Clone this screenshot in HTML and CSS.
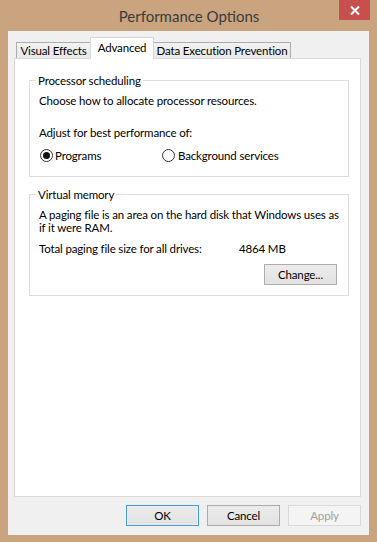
FILE: index.html
```html
<!DOCTYPE html>
<html>
<head>
<meta charset="utf-8">
<link rel="stylesheet" href="styles.css">
</head>
<body>
<div class="window">
  <div class="titlebar">
    <span class="title">Performance Options</span>
    <button class="close" aria-label="Close">
      <svg width="10" height="9" viewBox="0 0 10 9"><path d="M1 0.5 L9 8.5 M9 0.5 L1 8.5" stroke="#fff" stroke-width="2"/></svg>
    </button>
  </div>
  <div class="client">
    <div class="tabs">
      <div class="tab t-visual">Visual Effects</div>
      <div class="tab active t-adv">Advanced</div>
      <div class="tab t-dep">Data Execution Prevention</div>
    </div>
    <div class="panel">
      <div class="group g1">
        <span class="legend">Processor scheduling</span>
        <p class="line">Choose how to allocate processor resources.</p>
        <p class="line adjust">Adjust for best performance of:</p>
        <div class="radios">
          <label class="radio r1">
            <svg width="13" height="13" viewBox="0 0 13 13"><circle cx="6.5" cy="6.5" r="6" fill="#fff" stroke="#333"/><circle cx="6.5" cy="6.5" r="3.5" fill="#111"/></svg>
            <span>Programs</span>
          </label>
          <label class="radio r2">
            <svg width="13" height="13" viewBox="0 0 13 13"><circle cx="6.5" cy="6.5" r="6" fill="#fff" stroke="#333"/></svg>
            <span>Background services</span>
          </label>
        </div>
      </div>
      <div class="group g2">
        <span class="legend">Virtual memory</span>
        <p class="line nowrap">A paging file is an area on the hard disk that Windows uses as<br>if it were RAM.</p>
        <div class="total">
          <span class="total-label">Total paging file size for all drives:</span>
          <span class="total-value">4864 MB</span>
        </div>
        <div class="change-row">
          <button class="btn">Change...</button>
        </div>
      </div>
    </div>
    <div class="buttons">
      <button class="btn default">OK</button>
      <button class="btn">Cancel</button>
      <button class="btn disabled">Apply</button>
    </div>
  </div>
</div>
</body>
</html>
```
FILE: styles.css
```css
html, body {
  margin: 0;
  padding: 0;
}
body {
  width: 377px;
  height: 542px;
  overflow: hidden;
  background: #c9a47e;
  font-family: Lato, "Noto Sans", sans-serif;
  font-size: 11.5px;
  letter-spacing: -0.15px;
  line-height: 13px;
  color: #000;
}
.window {
  display: flex;
  flex-direction: column;
  height: 542px;
}
.titlebar {
  height: 31px;
  position: relative;
  display: flex;
  justify-content: center;
  align-items: center;
}
.title {
  font-size: 15px;
  letter-spacing: 0;
  line-height: 20px;
  color: #3b3b3b;
  padding-left: 1px;
}
.close {
  position: absolute;
  top: 0;
  right: 7px;
  width: 31px;
  height: 20px;
  margin: 0;
  padding: 0;
  border: none;
  background: #c7504f;
  display: flex;
  align-items: center;
  justify-content: center;
}
.client {
  flex: 1;
  margin: 0 8px 7px 8px;
  background: #f0f0f0;
  padding: 6px 8px 9px 6px;
  display: flex;
  flex-direction: column;
  min-height: 0;
}
.tabs {
  display: flex;
  align-items: flex-end;
  height: 21px;
  padding-left: 2px;
}
.tab {
  height: 16px;
  box-sizing: border-box;
  border: 1px solid #acacac;
  border-bottom: none;
  background: linear-gradient(#f2f2f2, #e8e8e8);
  padding: 0;
  text-align: center;
  line-height: 15px;
  white-space: nowrap;
  position: relative;
}
.t-visual {
  width: 75px;
}
.t-adv {
  width: 64px;
}
.t-dep {
  width: 137px;
  border-left: none;
}
.tab.active {
  height: 22px;
  margin: 0 0 -1px -1px;
  border-color: #d9d9d9;
  background: #fff;
  padding-top: 2px;
  z-index: 1;
}
.panel {
  flex: 1;
  border: 1px solid #d9d9d9;
  background: #fff;
  padding: 21px 0 0 14px;
  min-height: 0;
}
.group {
  position: relative;
  width: 320px;
  box-sizing: border-box;
  border: 1px solid #dcdcdc;
  padding: 0 9px;
}
.legend {
  position: absolute;
  top: -7px;
  left: 6px;
  background: #fff;
  padding: 0 2px;
  line-height: 13px;
}
.line {
  margin: 0;
}
.nowrap {
  white-space: nowrap;
}
.g1 {
  padding-top: 13px;
  padding-bottom: 14px;
}
.g1 .adjust {
  margin-top: 19px;
}
.radios {
  display: flex;
  margin-top: 10px;
  height: 13px;
}
.radio {
  display: flex;
  align-items: center;
  gap: 2px;
  white-space: nowrap;
}
.radio svg {
  flex: none;
}
.r1 {
  width: 122px;
  margin-left: 1px;
}
.r2 {
  gap: 3px;
}
.g2 {
  margin-top: 17px;
  padding-top: 13px;
  padding-bottom: 10px;
}
.total {
  display: flex;
  margin-top: 8px;
}
.total-label {
  width: 200px;
}
.change-row {
  display: flex;
  justify-content: flex-end;
  margin-top: 9px;
  padding-right: 2px;
}
.btn {
  width: 73px;
  height: 21px;
  margin: 0;
  padding: 0;
  box-sizing: border-box;
  border: 1px solid #acacac;
  background: linear-gradient(#ececec, #e2e2e2);
  font-family: Lato, "Noto Sans", sans-serif;
  font-size: 11.5px;
  letter-spacing: -0.15px;
  line-height: 13px;
  color: #000;
}
.btn.default {
  border-color: #4a9ae0;
  box-shadow: inset 0 0 0 1px #e6f0fa;
}
.btn.disabled {
  border-color: #d9d9d9;
  background: #f4f4f4;
  color: #a0a0a0;
}
.buttons {
  display: flex;
  justify-content: flex-end;
  gap: 8px;
  margin-top: 8px;
}
```
